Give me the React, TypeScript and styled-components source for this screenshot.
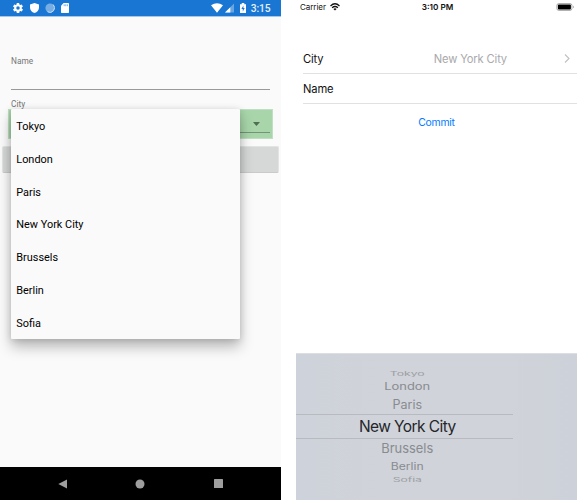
import React from "react";
import styled, { createGlobalStyle } from "styled-components";

const GlobalStyle = createGlobalStyle`
  * { box-sizing: border-box; }
  body { margin: 0; background: #fff; overflow: hidden; }
`;

const Screens = styled.main`
  display: flex;
  justify-content: space-between;
  width: 577px;
  height: 500px;
  background: #fff;
`;

/* Android */

const AndroidScreen = styled.section`
  position: relative;
  display: flex;
  flex-direction: column;
  width: 281px;
  height: 500px;
  background: #fafafa;
  font-family: Roboto, sans-serif;
  overflow: hidden;
`;

const AndroidStatus = styled.header`
  display: flex;
  justify-content: space-between;
  height: 17px;
  padding: 0 10.5px 0 12px;
  background: #1976d2;
  border-bottom: 1px solid #a3c7ed;
  color: #fff;
`;

const StatusGroup = styled.div<{ $gap: number }>`
  display: flex;
  align-items: center;
  gap: ${(p) => p.$gap}px;
  height: 16px;
`;

const BatterySlot = styled.span`
  display: flex;
  margin-left: 4px;
`;

const AndroidTime = styled.span`
  margin-left: 2.5px;
  padding-top: 1px;
  font-size: 10.3px;
  line-height: 16px;
  font-weight: 500;
  letter-spacing: -0.1px;
  color: #e6f1fb;
`;

const AndroidForm = styled.div`
  display: flex;
  flex-direction: column;
  flex: 1;
  padding-top: 39px;
`;

const FieldLabel = styled.label`
  margin-left: 11px;
  height: 10px;
  font-size: 8.3px;
  line-height: 10px;
  color: #757575;
`;

const NameInput = styled.div`
  height: 24px;
  margin: 0 11px 9px;
  border-bottom: 1px solid #9b9899;
`;

const Spinner = styled.div`
  display: flex;
  justify-content: flex-end;
  height: 30px;
  margin: 0 8px;
  padding: 0 2px 5px;
  border: 1px solid #c0dfc2;
  background: #a8d5aa;
`;

const SpinnerLine = styled.div`
  display: flex;
  align-items: center;
  justify-content: flex-end;
  width: 100%;
  padding: 5px 10px 0 0;
  border-bottom: 1px solid #759477;
`;

const CommitBar = styled.div`
  height: 27px;
  margin: 7px 2px 0;
  border: 1px solid #e2e3e3;
  border-bottom-color: #c9caca;
  border-radius: 2px;
  background: #d6d7d7;
`;

const Popup = styled.ul`
  position: absolute;
  left: 11px;
  top: 109px;
  width: 229px;
  height: 230px;
  margin: 0;
  padding: 1px 0 0;
  list-style: none;
  background: #fafafa;
  border-radius: 1px;
  box-shadow: 0 8px 14px rgba(0, 0, 0, 0.26), 0 1px 7px rgba(0, 0, 0, 0.14);
`;

const PopupItem = styled.li`
  height: 32.8px;
  padding-left: 5.3px;
  font-size: 10.9px;
  line-height: 33px;
  color: #000;
`;

const NavBar = styled.nav`
  display: flex;
  align-items: center;
  justify-content: space-between;
  height: 33px;
  padding: 0 58.5px 0 58px;
  background: #000;
`;

/* iOS */

const IosScreen = styled.section`
  display: flex;
  flex-direction: column;
  width: 281px;
  height: 500px;
  background: #fff;
  font-family: Inter, sans-serif;
`;

const IosStatus = styled.header`
  display: grid;
  grid-template-columns: 1fr auto 1fr;
  align-items: center;
  height: 14px;
  margin-bottom: 30px;
  padding: 0 2px 0 4px;
  font-size: 8px;
  line-height: 14px;
  color: #111;
`;

const Carrier = styled.div`
  display: flex;
  align-items: center;
  gap: 4px;
  letter-spacing: -0.05px;
`;

const IosTime = styled.span`
  font-weight: 600;
  font-size: 8.2px;
`;

const BatteryBox = styled.div`
  display: flex;
  justify-content: flex-end;
`;

const TableRow = styled.div<{ $h: number }>`
  display: flex;
  align-items: center;
  height: ${(p) => p.$h}px;
  margin-left: 7px;
  padding-right: 7px;
  border-bottom: 1px solid #e1e1e3;
  font-size: 11.2px;
  letter-spacing: -0.15px;
  color: #111;
`;

const RowValue = styled.span`
  margin-left: auto;
  margin-right: 57px;
  color: #a9a9ac;
`;

const CommitLink = styled.button`
  align-self: center;
  height: 20px;
  margin-top: 9px;
  padding: 0;
  border: 0;
  background: none;
  font: 10.4px/20px Inter, sans-serif;
  letter-spacing: -0.25px;
  color: #007aff;
`;

const Picker = styled.div`
  display: flex;
  flex-direction: column;
  height: 147px;
  margin-top: auto;
  padding-top: 16px;
  border-top: 1px solid #dcdee1;
  background: linear-gradient(90deg, #ced2da 0, #d0d3d9 30%, #d0d3d9 75%, #cdd1d9 100%);
`;

const Wheel = styled.div`
  width: 217px;
  padding-left: 5.5px;
`;

const Slot = styled.div<{ $h: number; $color: string }>`
  display: flex;
  align-items: center;
  justify-content: center;
  height: ${(p) => p.$h}px;
  color: ${(p) => p.$color};
`;

const Selected = styled.div`
  display: flex;
  align-items: center;
  justify-content: center;
  width: 217px;
  height: 25px;
  padding: 1px 0 0 5.5px;
  border-top: 1px solid #b7babf;
  border-bottom: 1px solid #b7babf;
  font-size: 15.5px;
  line-height: 22px;
  letter-spacing: -0.58px;
  color: #24262a;
`;

const WheelText = styled.span<{ $size: number; $squash: number }>`
  font-size: ${(p) => p.$size}px;
  line-height: 1;
  transform: scaleY(${(p) => p.$squash});
`;

const cities = ["Tokyo", "London", "Paris", "New York City", "Brussels", "Berlin", "Sofia"];

const above = [
  { name: "Tokyo", h: 9, size: 12.2, squash: 0.46, color: "#9c9fa4" },
  { name: "London", h: 17, size: 12.9, squash: 0.77, color: "#888b90" },
  { name: "Paris", h: 18, size: 12.5, squash: 1.02, color: "#888b90" },
];
const below = [
  { name: "Brussels", h: 20, size: 12.9, squash: 1.02, color: "#888b90" },
  { name: "Berlin", h: 16, size: 12.2, squash: 0.8, color: "#888b90" },
  { name: "Sofia", h: 10, size: 12.1, squash: 0.5, color: "#9c9fa4" },
];

const GearIcon = () => (
  <svg width="12" height="12" viewBox="0 0 24 24" fill="#fff">
    <path d="M19.4 13a7.6 7.6 0 0 0 0-2l2.1-1.6c.2-.2.3-.4.1-.7l-2-3.4c-.1-.2-.4-.3-.6-.2l-2.5 1a7.3 7.3 0 0 0-1.7-1l-.4-2.6a.5.5 0 0 0-.5-.5h-4a.5.5 0 0 0-.5.4L9.1 5.1c-.6.2-1.2.6-1.7 1l-2.5-1c-.2-.1-.5 0-.6.2l-2 3.4c-.1.2-.1.5.1.7L4.6 11a7.6 7.6 0 0 0 0 2l-2.2 1.6c-.2.2-.2.4-.1.7l2 3.4c.1.2.4.3.6.2l2.5-1c.5.4 1.1.8 1.7 1l.4 2.6c0 .3.2.5.5.5h4c.2 0 .4-.2.5-.4l.4-2.7c.6-.2 1.2-.6 1.7-1l2.5 1c.2.1.5 0 .6-.2l2-3.4c.1-.2.1-.5-.1-.6zM12 15.5a3.5 3.5 0 1 1 0-7 3.5 3.5 0 0 1 0 7z" />
  </svg>
);

const ShieldIcon = () => (
  <svg width="9" height="10" viewBox="0 0 9 10">
    <path d="M4.5 0 9 1.6V4.5C9 7 7.2 9.2 4.5 10 1.8 9.2 0 7 0 4.5V1.6z" fill="#fff" />
  </svg>
);

const SyncIcon = () => (
  <svg width="10" height="10" viewBox="0 0 10 10">
    <circle cx="5" cy="5" r="4.6" fill="#75ade4" />
    <path d="M8.2 1.6a4.6 4.6 0 0 1-5.6 7.2" fill="none" stroke="#c9dff5" strokeWidth="1" />
  </svg>
);

const SdIcon = () => (
  <svg width="8" height="10" viewBox="0 0 8 10">
    <path d="M2.6 0H7.3Q8 0 8 .7V9.3Q8 10 7.3 10H.7Q0 10 0 9.3V2.7z" fill="#fff" />
    <path d="M3.2 1.3v1.9M4.8 1.3v1.9M6.4 1.3v1.9" stroke="#5b9fe0" strokeWidth=".8" />
  </svg>
);

const AndroidWifi = () => (
  <svg width="12" height="10" viewBox="0 0 12 10">
    <path d="M0 2.3Q6-2 12 2.3L6 9.8z" fill="#fff" />
  </svg>
);

const SignalIcon = () => (
  <svg width="9" height="10" viewBox="0 0 9 10">
    <path d="M0 9.6 9 .6v9z" fill="#68a5e1" />
    <path d="M0 9.6 5.3 4.3v5.3z" fill="#fff" />
  </svg>
);

const ChargingIcon = () => (
  <svg width="6" height="10" viewBox="0 0 6 10">
    <path d="M0 1.2h1.7V0h2.6v1.2H6V10H0z" fill="#fff" />
    <path d="M3.4 2.4 1.4 6h1.4v2.4L4.7 5H3.4z" fill="#1976d2" />
  </svg>
);

const IosWifi = () => (
  <svg width="10" height="8" viewBox="0 0 10 8" fill="none" stroke="#111" strokeWidth="1.3">
    <path d="M.5 2.9Q5-1.3 9.5 2.9M2.1 4.7Q5 2.2 7.9 4.7" />
    <path d="M3.4 5.9Q5 4.7 6.6 5.9L5 7.5z" fill="#111" stroke="none" />
  </svg>
);

const BatteryIcon = () => (
  <svg width="19" height="8" viewBox="0 0 19 8">
    <rect x=".9" y=".6" width="15" height="6.8" rx="1.8" fill="#fff" stroke="#929292" strokeWidth=".8" />
    <rect x="1.9" y="1.5" width="13" height="5" rx=".9" fill="#000" />
    <path d="M17.2 2.8q.9.2.9 1.2t-.9 1.2z" fill="#aaa" />
  </svg>
);

export default function App() {
  return (
    <>
      <GlobalStyle />
      <Screens>
        <AndroidScreen>
          <AndroidStatus>
            <StatusGroup $gap={6}>
              <GearIcon />
              <ShieldIcon />
              <SyncIcon />
              <SdIcon />
            </StatusGroup>
            <StatusGroup $gap={2}>
              <AndroidWifi />
              <SignalIcon />
              <BatterySlot>
                <ChargingIcon />
              </BatterySlot>
              <AndroidTime>3:15</AndroidTime>
            </StatusGroup>
          </AndroidStatus>
          <AndroidForm>
            <FieldLabel>Name</FieldLabel>
            <NameInput />
            <FieldLabel>City</FieldLabel>
            <Spinner>
              <SpinnerLine>
                <svg width="7" height="4" viewBox="0 0 7 4">
                  <path d="M0 0h7L3.5 4z" fill="#4f6e52" />
                </svg>
              </SpinnerLine>
            </Spinner>
            <CommitBar />
          </AndroidForm>
          <Popup>
            {cities.map((city) => (
              <PopupItem key={city}>{city}</PopupItem>
            ))}
          </Popup>
          <NavBar>
            <svg width="9" height="10" viewBox="0 0 9 10">
              <path d="M9 .5v9L.3 5z" fill="#9e9e9e" />
            </svg>
            <svg width="10" height="10" viewBox="0 0 10 10">
              <circle cx="5" cy="5" r="4.5" fill="#9e9e9e" />
            </svg>
            <svg width="9" height="9" viewBox="0 0 9 9">
              <rect width="9" height="9" rx=".6" fill="#9e9e9e" />
            </svg>
          </NavBar>
        </AndroidScreen>

        <IosScreen>
          <IosStatus>
            <Carrier>
              Carrier
              <IosWifi />
            </Carrier>
            <IosTime>3:10 PM</IosTime>
            <BatteryBox>
              <BatteryIcon />
            </BatteryBox>
          </IosStatus>
          <TableRow $h={30}>
            City
            <RowValue>New York City</RowValue>
            <svg width="6" height="9" viewBox="0 0 6 9">
              <path d="M1 .5 5 4.5 1 8.5" fill="none" stroke="#c0c0c4" strokeWidth="1.1" />
            </svg>
          </TableRow>
          <TableRow $h={30}>Name</TableRow>
          <CommitLink>Commit</CommitLink>
          <Picker>
            <Wheel>
              {above.map((s) => (
                <Slot key={s.name} $h={s.h} $color={s.color}>
                  <WheelText $size={s.size} $squash={s.squash}>{s.name}</WheelText>
                </Slot>
              ))}
            </Wheel>
            <Selected>New York City</Selected>
            <Wheel>
              {below.map((s) => (
                <Slot key={s.name} $h={s.h} $color={s.color}>
                  <WheelText $size={s.size} $squash={s.squash}>{s.name}</WheelText>
                </Slot>
              ))}
            </Wheel>
          </Picker>
        </IosScreen>
      </Screens>
    </>
  );
}
